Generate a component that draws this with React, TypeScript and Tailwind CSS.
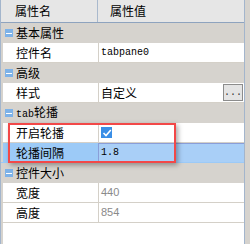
import React from "react";

const cjk = { fontFamily: '"Noto Sans CJK SC", "Noto Sans", sans-serif' };
const mono = { fontFamily: '"Liberation Mono", "DejaVu Sans Mono", monospace' };

function Section({ children }: { children: React.ReactNode }) {
  return (
    <div className="flex items-center h-[20px] bg-[#d6d3ce] text-[12px] text-black" style={cjk}>
      <div className="ml-[4px] w-[8px] h-[8px] bg-[#7db2e8] flex items-center justify-center">
        <div className="w-[6px] h-[1px] bg-white" />
      </div>
      <div className="ml-[3px] leading-none">{children}</div>
    </div>
  );
}

function Row({
  label,
  children,
  selected,
}: {
  label: string;
  children?: React.ReactNode;
  selected?: boolean;
}) {
  return (
    <div className={"flex h-[20px] border-b " + (selected ? "border-[#9ccaf7] bg-[#9ccaf7]" : "border-[#d4d0c8] bg-white")}>
      <div className="w-[2px] bg-[#d6d3ce]" />
      <div className={"w-[96px] flex items-center pl-[13px] text-[12px] text-black border-r " + (selected ? "border-[#8a9ed8]" : "border-[#d4d0c8]")} style={cjk}>
        <span className="leading-none">{label}</span>
      </div>
      <div className={"flex-1 flex items-center pl-[2px] relative " + (selected ? "bg-[#a9cff7] border-t border-[#8a9ed8]" : "")}>
        {children}
      </div>
    </div>
  );
}

export default function App() {
  return (
    <div className="w-[250px] h-[244px] bg-[#d6d3ce] flex relative overflow-hidden">
      <div className="w-[245px] h-full flex flex-col bg-white border-l border-r border-[#a3b5cc]">
        <div className="flex h-[23px] bg-[#e6e6e6] border-b border-[#8ea3be] text-[12px] text-black shrink-0" style={cjk}>
          <div className="w-[97px] border-r border-[#a9b9cd] flex items-center pl-[14px]">
            <span className="leading-none">属性名</span>
          </div>
          <div className="flex-1 flex items-center pl-[12px]">
            <span className="leading-none">属性值</span>
          </div>
        </div>
        <Section>基本属性</Section>
        <Row label="控件名">
          <span className="text-[10px] text-black leading-none" style={mono}>tabpane0</span>
        </Row>
        <Section>高级</Section>
        <Row label="样式">
          <span className="text-[12px] text-black leading-none" style={cjk}>自定义</span>
          <div className="absolute right-[1px] top-[1px] w-[20px] h-[17px] bg-[#e4e4e4] border border-[#8c8c8c] flex items-end justify-center pb-[2px]">
            <span className="text-[10px] leading-none text-[#333]" style={mono}>...</span>
          </div>
        </Row>
        <Section>
          <span style={mono} className="text-[10px]">tab</span>轮播
        </Section>
        <Row label="开启轮播">
          <div className="w-[11px] h-[11px] bg-[#3a8ee6] flex items-center justify-center">
            <svg width="10" height="10" viewBox="0 0 10 10">
              <path d="M1.5 5 L4 7.5 L8.8 2" stroke="white" strokeWidth="1.6" fill="none" />
            </svg>
          </div>
        </Row>
        <Row label="轮播间隔" selected>
          <span className="text-[10px] text-black leading-none" style={mono}>1.8</span>
        </Row>
        <Section>控件大小</Section>
        <Row label="宽度">
          <span className="text-[11px] text-[#8a8a8a] leading-none" style={{ fontFamily: '"Liberation Sans", sans-serif' }}>440</span>
        </Row>
        <Row label="高度">
          <span className="text-[11px] text-[#8a8a8a] leading-none" style={{ fontFamily: '"Liberation Sans", sans-serif' }}>854</span>
        </Row>
        <div className="flex-1 flex">
          <div className="w-[2px] bg-[#d6d3ce]" />
          <div className="flex-1 bg-white" />
        </div>
      </div>
      <div className="absolute left-[8px] top-[123px] w-[168px] h-[40px] border-2 border-[#f24848] shadow-[2px_2px_5px_rgba(0,0,0,0.35)]" />
    </div>
  );
}
